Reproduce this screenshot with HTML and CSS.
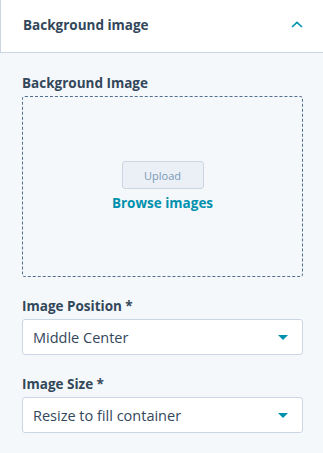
FILE: index.html
```html
<!DOCTYPE html>
<html lang="en">

<head>
  <meta charset="UTF-8">
  <meta name="viewport" content="width=device-width, initial-scale=1.0">
  <title>Background image</title>
  <link rel="stylesheet" href="styles.css">
</head>

<body>

  <div class="panel">
    <div class="panel-header">
      <span class="panel-title">Background image</span>
      <svg class="chevron" width="12" height="7" viewBox="0 0 12 7">
        <path d="M1 6 L6 1.3 L11 6" fill="none" stroke="#0091ae" stroke-width="1.6" />
      </svg>
    </div>

    <div class="panel-body">
      <div class="field">
        <label>Background Image</label>
        <div class="dropzone">
          <button class="upload-btn">Upload</button>
          <a class="browse-link">Browse images</a>
        </div>
      </div>

      <div class="field">
        <label>Image Position *</label>
        <div class="select">
          <span>Middle Center</span>
          <span class="caret"></span>
        </div>
      </div>

      <div class="field">
        <label>Image Size *</label>
        <div class="select">
          <span>Resize to fill container</span>
          <span class="caret"></span>
        </div>
      </div>
    </div>
  </div>

</body>

</html>
```

FILE: styles.css
```css
* {
  font-family: "Open Sans", sans-serif;
  box-sizing: border-box;
}

body {
  margin: 0;
  padding: 0;
  background-color: #f5f8fa;
  color: #33475b;
}

.panel-header {
  height: 53px;
  display: flex;
  align-items: center;
  justify-content: space-between;
  padding: 0 20px 0 22px;
  background-color: white;
  border-left: 1px solid #cbd6e2;
  border-bottom: 1px solid #cbd6e2;
}

.panel-title {
  font-size: 13.5px;
  font-weight: 700;
  margin-top: -2px;
}

.chevron {
  margin-top: -4px;
}

.panel-body {
  padding: 22px 20px 20px 22px;
  display: flex;
  flex-direction: column;
  gap: 21px;
}

.field label {
  display: block;
  font-size: 13.5px;
  font-weight: 700;
  line-height: 16px;
  margin-bottom: 5px;
}

.dropzone {
  height: 181px;
  border: 1px dashed #516f90;
  border-radius: 3px;
  display: flex;
  flex-direction: column;
  align-items: center;
  justify-content: center;
  gap: 5px;
}

.upload-btn {
  width: 82px;
  height: 28px;
  background-color: #eaf0f6;
  border: 1px solid #cbd6e2;
  border-radius: 3px;
  color: #7c98b6;
  font-size: 11px;
}

.browse-link {
  color: #0091ae;
  font-size: 13.5px;
  font-weight: 700;
}

.select {
  height: 36px;
  background-color: white;
  border: 1px solid #cbd6e2;
  border-radius: 3px;
  display: flex;
  align-items: center;
  justify-content: space-between;
  padding: 0 14px 0 10px;
  font-size: 14.5px;
}

.caret {
  width: 0;
  height: 0;
  border-left: 5px solid transparent;
  border-right: 5px solid transparent;
  border-top: 5px solid #0091ae;
}
```
